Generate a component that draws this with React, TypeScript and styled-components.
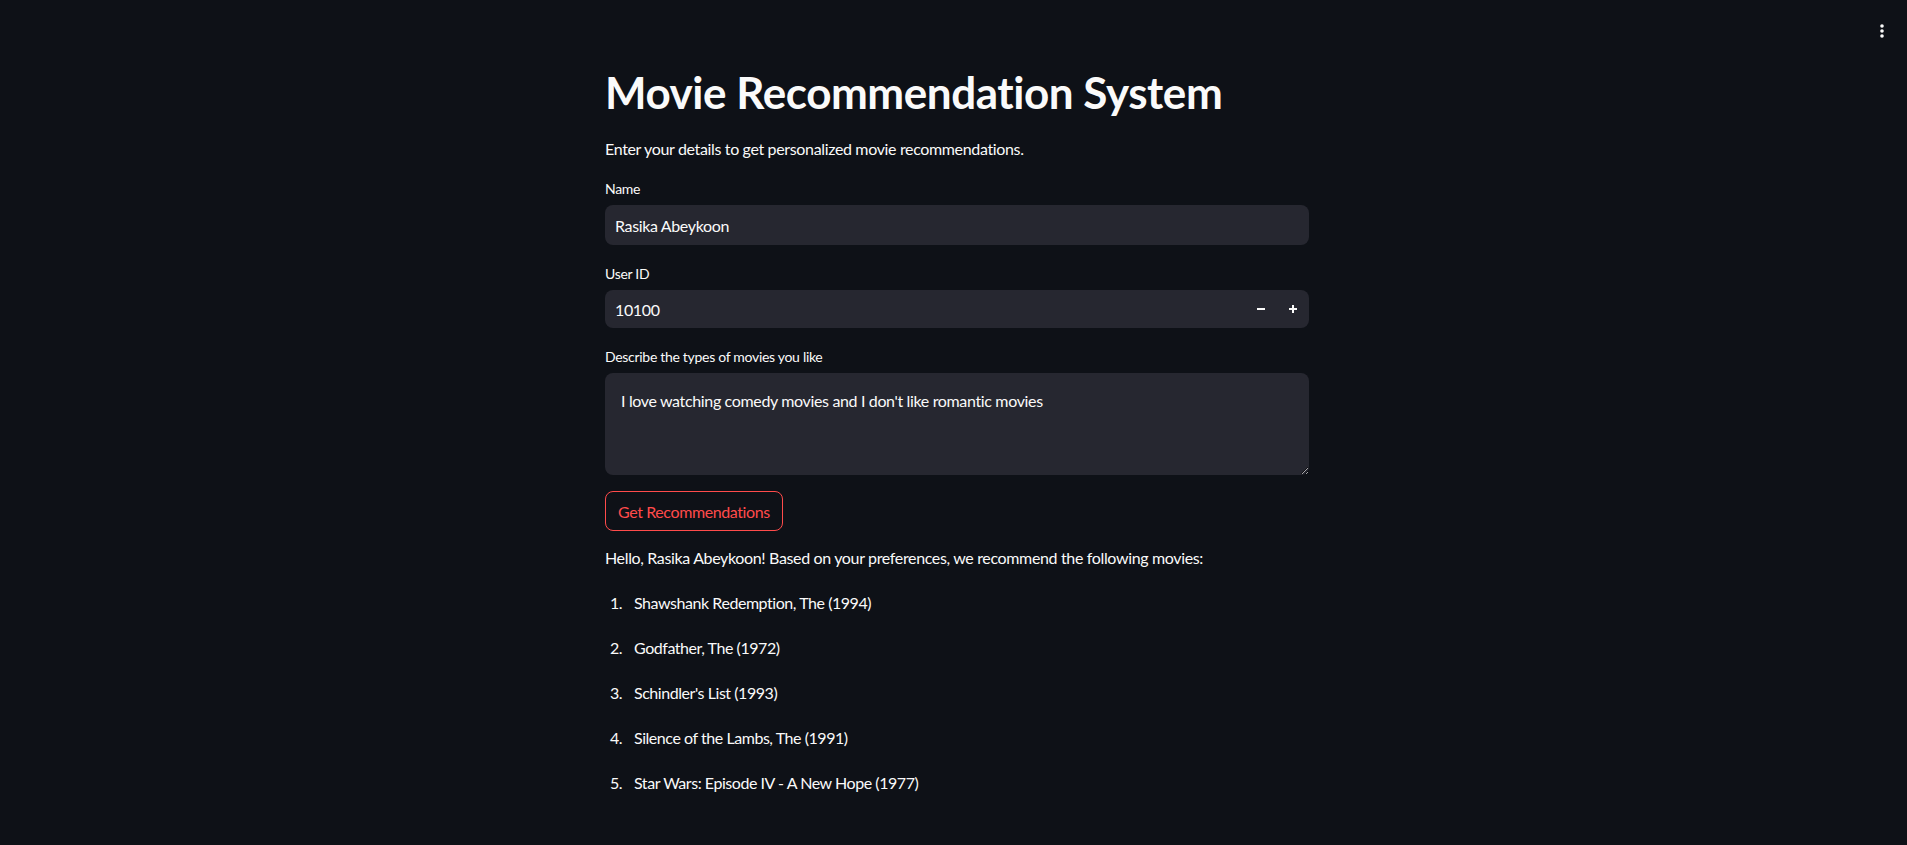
import React from "react";
import styled, { createGlobalStyle } from "styled-components";

const GlobalStyle = createGlobalStyle`
  html, body {
    margin: 0;
    padding: 0;
    background: #0e1117;
    color: #fafafa;
    font-family: Lato, "Noto Sans", sans-serif;
    color-scheme: dark;
  }
  * { box-sizing: border-box; }
`;

const Page = styled.div`
  min-height: 845px;
  background: #0e1117;
  display: flex;
  flex-direction: column;
`;

const Header = styled.header`
  height: 60px;
  display: flex;
  justify-content: flex-end;
  align-items: flex-start;
  padding: 22px 17px 0 0;
`;

const MenuButton = styled.button`
  width: 16px;
  height: 18px;
  padding: 0;
  border: none;
  background: transparent;
  color: #fafafa;
  display: flex;
  cursor: pointer;
`;

const Main = styled.main`
  width: 704px;
  margin-left: 605px;
  display: flex;
  flex-direction: column;
  letter-spacing: -0.35px;
`;

const Title = styled.h1`
  margin: 6px 0 0 0;
  font-size: 44px;
  line-height: 52.8px;
  font-weight: 700;
  color: #fafafa;
  letter-spacing: -0.45px;
`;

const Paragraph = styled.p<{ $top: number }>`
  margin: ${(p) => p.$top}px 0 0 0;
  font-size: 16px;
  line-height: 25.6px;
  color: #fafafa;
`;

const Field = styled.div<{ $top: number }>`
  margin-top: ${(p) => p.$top}px;
  display: flex;
  flex-direction: column;
  gap: 6px;
`;

const Label = styled.label`
  font-size: 14px;
  line-height: 21px;
  color: #fafafa;
  letter-spacing: -0.3px;
`;

const InputBox = styled.div<{ $h: number }>`
  height: ${(p) => p.$h}px;
  background: #262730;
  border-radius: 8px;
  display: flex;
  align-items: center;
  overflow: hidden;
`;

const TextInput = styled.input`
  flex: 1;
  height: 100%;
  min-width: 0;
  border: none;
  outline: none;
  background: transparent;
  color: #fafafa;
  font-family: inherit;
  font-size: 16px;
  letter-spacing: -0.35px;
  padding: 0 10px;
`;

const StepButton = styled.button`
  width: 32px;
  height: 100%;
  border: none;
  background: transparent;
  color: #fafafa;
  display: flex;
  align-items: center;
  justify-content: center;
  padding: 0;
  cursor: pointer;
`;

const TextArea = styled.textarea`
  height: 102px;
  background: #262730;
  border: none;
  border-radius: 8px;
  outline: none;
  color: #fafafa;
  font-family: inherit;
  font-size: 16px;
  line-height: 25.6px;
  letter-spacing: -0.35px;
  padding: 15px 16px 13px;
  resize: vertical;
`;

const PrimaryButton = styled.button`
  align-self: flex-start;
  margin-top: 16px;
  height: 40px;
  padding: 0 12px;
  border: 1px solid #ff4b4b;
  border-radius: 8px;
  background: transparent;
  color: #ff4b4b;
  font-family: inherit;
  font-size: 16px;
  letter-spacing: -0.4px;
  cursor: pointer;
`;

const List = styled.ol`
  list-style: none;
  margin: 0;
  padding: 0;
`;

const Item = styled.li<{ $top: number }>`
  margin-top: ${(p) => p.$top}px;
  display: flex;
  font-size: 16px;
  line-height: 25.6px;
  color: #fafafa;
  letter-spacing: -0.45px;
`;

const Num = styled.span`
  width: 24px;
  margin-left: 5px;
  flex: none;
`;

const movies = [
  "Shawshank Redemption, The (1994)",
  "Godfather, The (1972)",
  "Schindler's List (1993)",
  "Silence of the Lambs, The (1991)",
  "Star Wars: Episode IV - A New Hope (1977)",
];

const MinusIcon = () => (
  <svg width="10" height="10" viewBox="0 0 10 10">
    <rect x="1" y="4" width="8" height="2" fill="currentColor" />
  </svg>
);

const PlusIcon = () => (
  <svg width="10" height="10" viewBox="0 0 10 10">
    <rect x="1" y="4" width="8" height="2" fill="currentColor" />
    <rect x="4" y="1" width="2" height="8" fill="currentColor" />
  </svg>
);

const DotsIcon = () => (
  <svg width="16" height="18" viewBox="0 0 16 18">
    <circle cx="8" cy="4" r="1.8" fill="currentColor" />
    <circle cx="8" cy="9" r="1.8" fill="currentColor" />
    <circle cx="8" cy="14" r="1.8" fill="currentColor" />
  </svg>
);

export default function App() {
  return (
    <Page>
      <GlobalStyle />
      <Header>
        <MenuButton aria-label="Main menu">
          <DotsIcon />
        </MenuButton>
      </Header>
      <Main>
        <Title>Movie Recommendation System</Title>
        <Paragraph $top={17}>
          Enter your details to get personalized movie recommendations.
        </Paragraph>
        <Field $top={17}>
          <Label>Name</Label>
          <InputBox $h={40}>
            <TextInput defaultValue="Rasika Abeykoon" />
          </InputBox>
        </Field>
        <Field $top={18}>
          <Label>User ID</Label>
          <InputBox $h={38}>
            <TextInput defaultValue="10100" />
            <StepButton aria-label="Decrement">
              <MinusIcon />
            </StepButton>
            <StepButton aria-label="Increment">
              <PlusIcon />
            </StepButton>
          </InputBox>
        </Field>
        <Field $top={18}>
          <Label>Describe the types of movies you like</Label>
          <TextArea defaultValue="I love watching comedy movies and I don't like romantic movies" />
        </Field>
        <PrimaryButton>Get Recommendations</PrimaryButton>
        <Paragraph $top={14}>
          Hello, Rasika Abeykoon! Based on your preferences, we recommend the following movies:
        </Paragraph>
        <List>
          {movies.map((m, i) => (
            <Item key={m} $top={19.4}>
              <Num>{i + 1}.</Num>
              <span>{m}</span>
            </Item>
          ))}
        </List>
      </Main>
    </Page>
  );
}
